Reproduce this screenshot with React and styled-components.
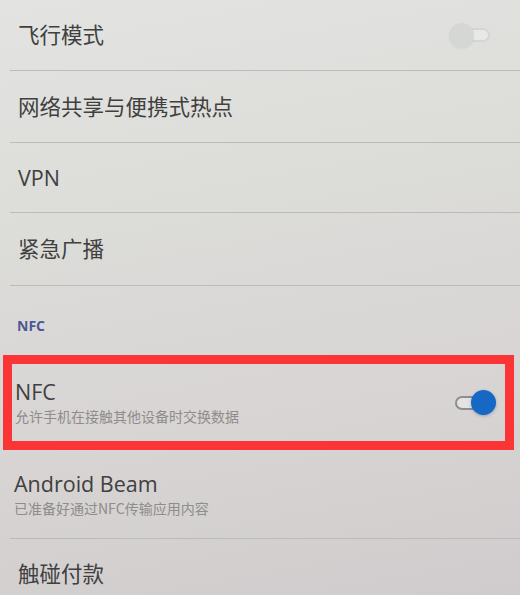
import styled, {createGlobalStyle} from 'styled-components'

const GlobalStyle = createGlobalStyle`
  html, body {
    margin: 0;
    padding: 0;
    overflow: hidden;
  }
  body {
    font-family: "Open Sans", "Noto Sans CJK SC", sans-serif;
  }
`

const Screen = styled.div`
  width: 520px;
  height: 595px;
  overflow: hidden;
  background: linear-gradient(170deg, #e3e4e1 0%, #dcdcd9 35%, #d8d5d4 65%, #d0cccd 100%);
`

const Row = styled.div`
  display: flex;
  align-items: center;
  justify-content: space-between;
  height: ${props => props.h}px;
  margin-left: 10px;
  padding: 0 30px 0 ${props => props.pad || 8}px;
  border-bottom: ${props => props.line ? '1px solid #bcbbb9' : 'none'};
  box-sizing: content-box;
`

const Title = styled.div`
  font-family: "Open Sans", "Noto Sans CJK SC", sans-serif;
  font-size: 21.5px;
  line-height: 26px;
  color: #404040;
`

const Sub = styled.div`
  font-family: "Noto Sans CJK SC", sans-serif;
  font-size: 14px;
  line-height: 20px;
  color: #8e8c8c;
  margin-top: 1px;
`

const Header = styled.div`
  height: 69px;
  padding: 30px 0 0 17px;
  box-sizing: border-box;
  font-family: "Open Sans", sans-serif;
  font-weight: 700;
  font-size: 14px;
  color: #4b5a94;
`

const Highlight = styled.div`
  margin: 0 6px 0 3px;
  height: 95px;
  box-sizing: border-box;
  border: 9px solid #fb3535;
  display: flex;
  align-items: center;
  justify-content: space-between;
  padding: 0 16px 0 3px;
`

const Track = styled.div`
  position: relative;
  width: 34px;
  height: 14px;
  border-radius: 7px;
  box-sizing: border-box;
  border: 2px solid ${props => props.on ? '#8e8e8e' : '#d4d6d4'};
  background: ${props => props.on ? '#e4e3e3' : '#e8e9e7'};
`

const Knob = styled.div`
  position: absolute;
  top: 50%;
  left: ${props => props.on ? '14px' : '-9px'};
  width: 25px;
  height: 25px;
  margin-top: -12.5px;
  border-radius: 50%;
  background: ${props => props.on ? '#1767c4' : '#d5d7d5'};
  box-shadow: ${props => props.on ? '0 1px 3px rgba(20, 60, 120, 0.35)' : '0 1px 2px rgba(0, 0, 0, 0.05)'};
`

const Toggle = ({on}) => (
  <Track on={on}>
    <Knob on={on} />
  </Track>
)

const App = () => {
  return (
    <Screen>
      <GlobalStyle />
      <Row h={70} line>
        <Title>飞行模式</Title>
        <Toggle />
      </Row>
      <Row h={71} line>
        <Title>网络共享与便携式热点</Title>
      </Row>
      <Row h={69} line>
        <Title>VPN</Title>
      </Row>
      <Row h={72} line>
        <Title>紧急广播</Title>
      </Row>
      <Header>NFC</Header>
      <Highlight>
        <div>
          <Title>NFC</Title>
          <Sub>允许手机在接触其他设备时交换数据</Sub>
        </div>
        <Toggle on />
      </Highlight>
      <Row h={88} pad={4} line>
        <div>
          <Title>Android Beam</Title>
          <Sub>已准备好通过NFC传输应用内容</Sub>
        </div>
      </Row>
      <Row h={70}>
        <Title>触碰付款</Title>
      </Row>
    </Screen>
  )
}

export default App
